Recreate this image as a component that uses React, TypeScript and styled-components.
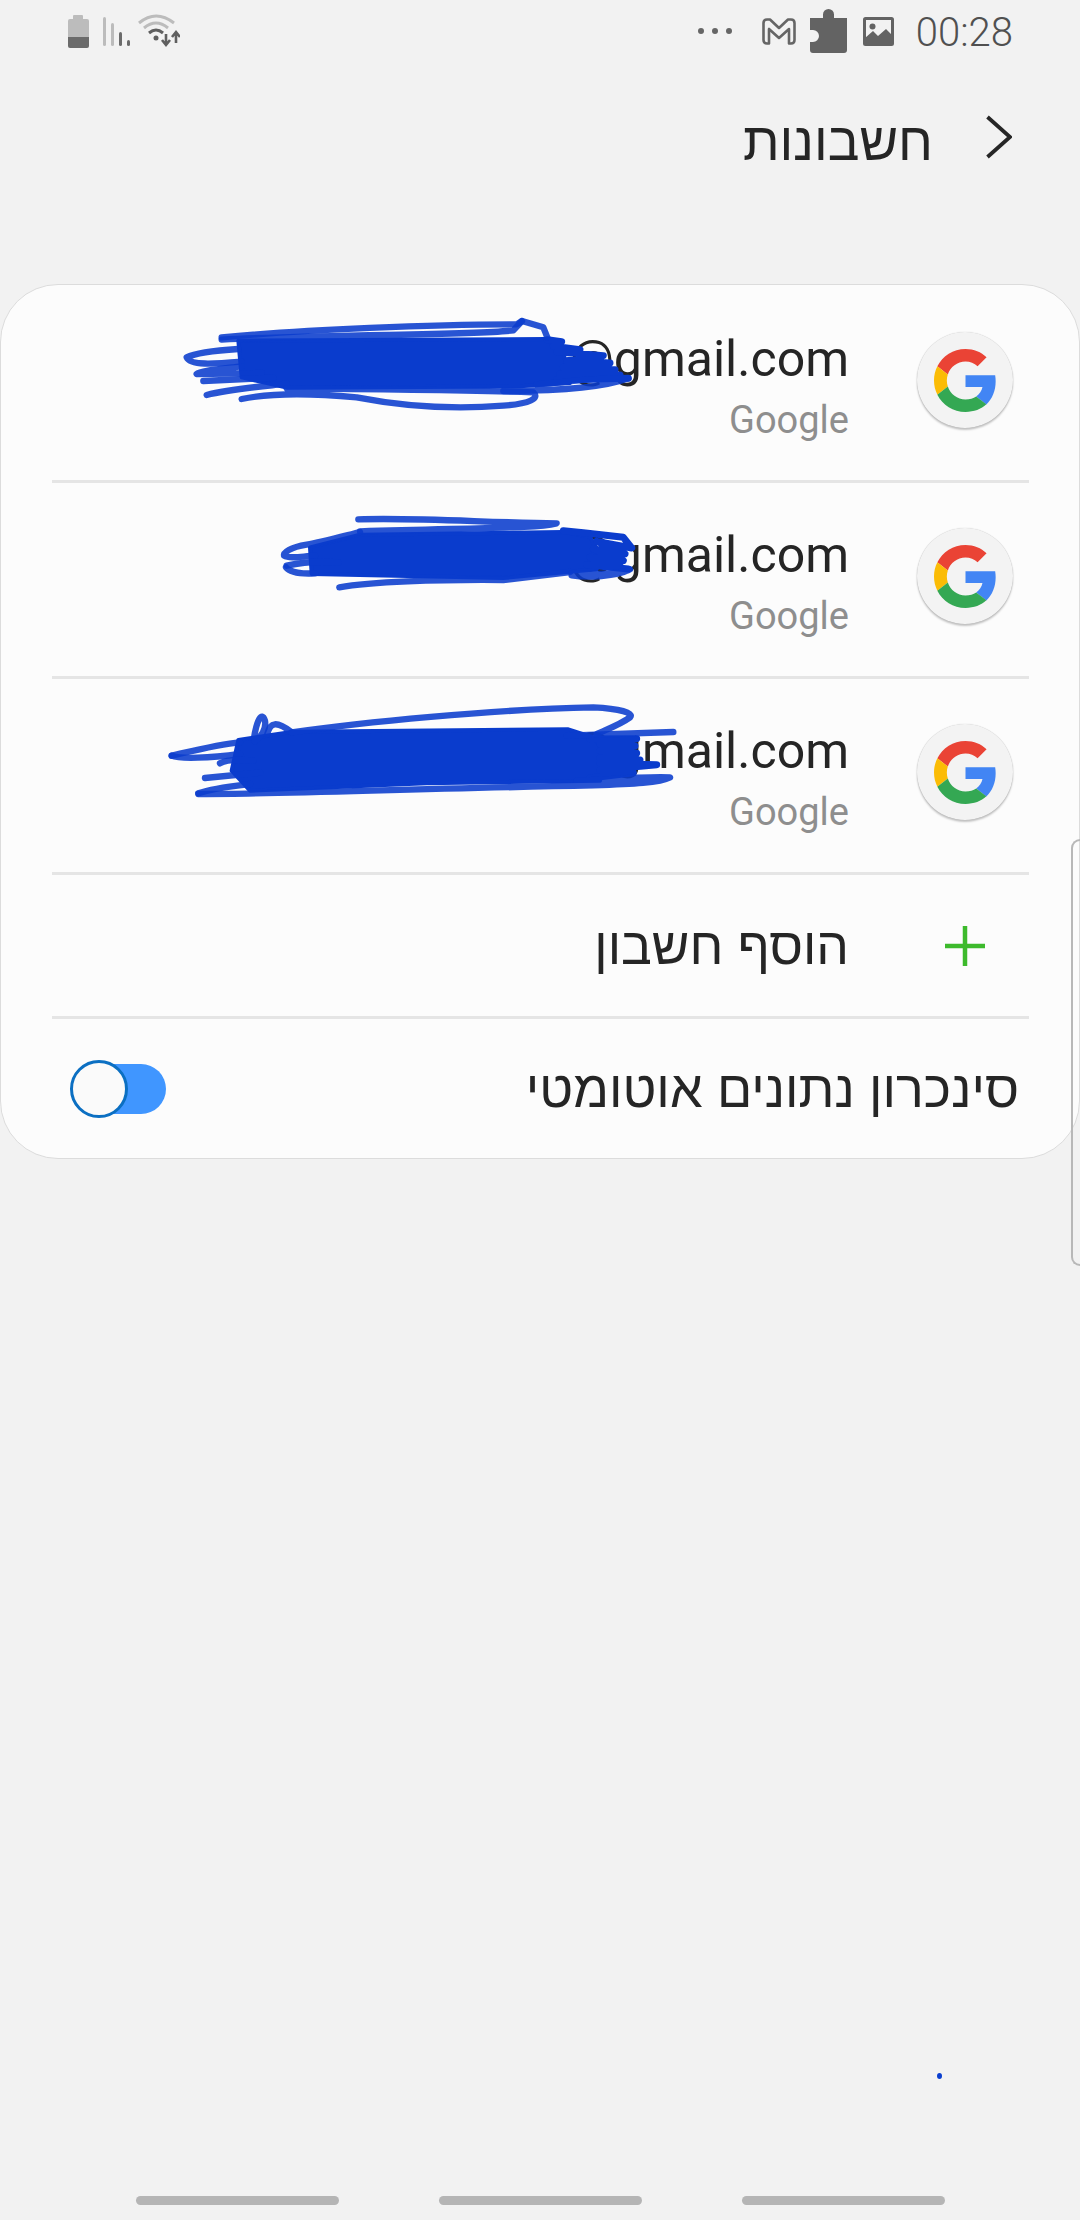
import React from "react";
import styled, { createGlobalStyle } from "styled-components";

const Global = createGlobalStyle`
  html, body { margin: 0; padding: 0; background: #f2f2f2; }
  #root { width: 1080px; height: 2220px; }
`;

const Page = styled.div`
  position: relative;
  width: 1080px;
  height: 2220px;
  overflow: hidden;
  background: #f2f2f2;
  display: flex;
  flex-direction: column;
  font-family: "Liberation Sans", "DejaVu Sans", sans-serif;
  color: #252525;
`;

const StatusBar = styled.div`
  height: 62px;
  padding: 0 67px 0 68px;
  display: flex;
  align-items: center;
  justify-content: space-between;
`;

const StatusRight = styled.div`
  display: flex;
  align-items: center;
`;

const StatusIcon = styled.svg<{ $gap: number }>`
  display: block;
  margin-left: ${(p) => p.$gap}px;
  flex: none;
`;

const Clock = styled.span`
  margin: 4px 0 0 22px;
  font-family: Roboto, sans-serif;
  font-weight: 300;
  font-size: 40px;
  line-height: 40px;
  color: #505050;
`;

const Header = styled.header`
  height: 222px;
  box-sizing: border-box;
  padding: 53px 68px 0 0;
  display: flex;
  flex-direction: row-reverse;
  align-items: flex-start;
  direction: ltr;
`;

const BackIcon = styled.svg`
  display: block;
  flex: none;
`;

const Title = styled.h1`
  margin: -3px 53px 0 0;
  font-size: 53px;
  font-weight: 400;
  line-height: 60px;
  direction: rtl;
`;

const Card = styled.section`
  direction: rtl;
  box-sizing: border-box;
  padding-top: 2px;
  background: #fcfcfc;
  border: 1px solid #dcdcdc;
  border-radius: 58px;
`;

const AccountRow = styled.div`
  position: relative;
  height: 193px;
  box-sizing: border-box;
  padding: 45px 66px 0 0;
  display: flex;
  align-items: flex-start;
`;

const Avatar = styled.div`
  width: 96px;
  height: 96px;
  flex: none;
  border-radius: 50%;
  background: #f3f3f3;
  box-shadow: 0 2px 2px rgba(0, 0, 0, 0.22), 0 0 1px rgba(0, 0, 0, 0.25);
  display: flex;
  align-items: center;
  justify-content: center;
`;

const AccountText = styled.div`
  margin-right: 68px;
  direction: ltr;
  text-align: right;
`;

const Email = styled.div`
  font-family: Roboto, sans-serif;
  font-size: 50px;
  line-height: 58px;
  margin-top: -2px;
`;

const Provider = styled.div`
  font-family: Roboto, sans-serif;
  font-size: 38px;
  line-height: 44px;
  margin-top: 10px;
  color: #8e8e8e;
`;

const Scribble = styled.svg<{ $left: number; $top: number }>`
  position: absolute;
  left: ${(p) => p.$left}px;
  top: ${(p) => p.$top}px;
  pointer-events: none;
`;

const Divider = styled.div`
  height: 3px;
  margin: 0 50px 0 51px;
  background: #e5e5e5;
`;

const AddRow = styled.div`
  height: 141px;
  box-sizing: border-box;
  padding-right: 66px;
  display: flex;
  align-items: center;
`;

const AddIconBox = styled.div`
  width: 96px;
  flex: none;
  display: flex;
  justify-content: center;
`;

const AddLabel = styled.span`
  margin-right: 68px;
  font-size: 51.5px;
  line-height: 56px;
`;

const SyncRow = styled.div`
  height: 139px;
  box-sizing: border-box;
  padding: 0 60px 0 69px;
  display: flex;
  align-items: center;
  justify-content: space-between;
`;

const SyncLabel = styled.span`
  font-size: 52px;
  line-height: 56px;
`;

const Toggle = styled.div`
  position: relative;
  width: 96px;
  height: 58px;
  flex: none;
  direction: ltr;
`;

const ToggleTrack = styled.div`
  position: absolute;
  left: 10px;
  right: 0;
  top: 4px;
  height: 50px;
  border-radius: 25px;
  background: #4096ff;
`;

const ToggleThumb = styled.div`
  position: absolute;
  left: 0;
  top: 0;
  box-sizing: border-box;
  width: 58px;
  height: 58px;
  border-radius: 50%;
  background: #fafafa;
  border: 3.5px solid #0b6fc2;
`;

const EdgeHandle = styled.div`
  position: absolute;
  right: 0;
  top: 839px;
  width: 9px;
  height: 427px;
  box-sizing: border-box;
  border: 2px solid #b8b8b8;
  border-right: 0;
  border-radius: 10px 0 0 10px;
`;

const PenDot = styled.div`
  position: absolute;
  left: 937px;
  top: 2073px;
  width: 5px;
  height: 6px;
  border-radius: 50%;
  background: #0b3fcf;
`;

const NavBar = styled.nav`
  margin-top: auto;
  height: 24px;
  box-sizing: border-box;
  padding-left: 136px;
  display: flex;
  gap: 100px;
`;

const NavPill = styled.div`
  width: 203px;
  height: 9px;
  border-radius: 5px;
  background: #b5b5b5;
`;

const GoogleG = () => (
  <svg width="63" height="63" viewBox="0 0 48 48">
    <path fill="#EA4335" d="M24 9.5c3.54 0 6.71 1.22 9.21 3.6l6.85-6.85C35.9 2.38 30.47 0 24 0 14.62 0 6.51 5.38 2.56 13.22l7.98 6.19C12.43 13.72 17.74 9.5 24 9.5z" />
    <path fill="#4285F4" d="M46.98 24.55c0-1.57-.15-3.09-.38-4.55H24v9.02h12.94c-.58 2.96-2.26 5.48-4.78 7.18l7.73 6c4.51-4.18 7.09-10.36 7.09-17.65z" />
    <path fill="#FBBC05" d="M10.53 28.59c-.48-1.45-.76-2.99-.76-4.59s.27-3.14.76-4.59l-7.98-6.19C.92 16.46 0 20.12 0 24c0 3.88.92 7.54 2.56 10.78l7.97-6.19z" />
    <path fill="#34A853" d="M24 48c6.48 0 11.93-2.13 15.89-5.81l-7.73-6c-2.15 1.45-4.92 2.3-8.16 2.3-6.26 0-11.57-4.22-13.47-9.91l-7.98 6.19C6.51 42.62 14.62 48 24 48z" />
  </svg>
);

// Hand-drawn pen marks over the private part of each address: a solid mass,
// opaque back-and-forth strokes at its end, and looser lines around it.
const PEN = "#0a3ccd";

type Mark = { left: number; top: number; w: number; h: number; block: string; cover: string; lines: string[] };

const PenMark = ({ left, top, w, h, block, cover, lines }: Mark) => (
  <Scribble $left={left} $top={top} width={w} height={h} viewBox={`0 0 ${w * 3} ${h * 3}`}>
    <path d={block} fill={PEN} stroke={PEN} strokeWidth="12" strokeLinejoin="round" />
    <path d={cover} fill="none" stroke={PEN} strokeWidth="21" strokeLinecap="round" strokeLinejoin="round" />
    {lines.map((d) => (
      <path key={d} d={d} fill="none" stroke={PEN} strokeWidth="19" strokeLinecap="round" strokeLinejoin="round" strokeOpacity="0.88" />
    ))}
  </Scribble>
);

const markOne = {
  block: "M205 95 L1130 90 L1180 130 L1200 222 L1050 232 L350 236 L215 205 Z",
  cover:
    "M1132 92 L1175 98 L1150 112 L1230 122 L1160 128 L1300 140 L1190 155 L1320 162 L1180 175 L1335 182 L1170 195 L1350 198 L1160 212 L1375 208",
  lines: [
    "M155 85 C400 62 800 46 1040 46 L1056 36 L1120 55 L1132 85",
    "M155 92 C500 74 900 80 1030 64 L1056 36",
    "M205 120 C130 125 70 135 50 145 C60 170 130 165 215 158",
    "M215 172 C150 180 90 185 80 195 L275 192",
    "M100 216 L310 206",
    "M110 258 C180 240 280 232 350 224",
    "M215 270 C300 252 420 252 560 265 C700 292 850 302 1000 290 C1080 284 1110 268 1090 250 C900 244 600 240 350 238",
    "M1000 246 C1150 246 1300 236 1375 208 C1300 204 1200 218 1100 226",
  ],
};

const markTwo = {
  block: "M120 130 L270 92 L880 84 L960 98 L990 150 L980 196 L700 222 L125 210 Z",
  cover:
    "M880 80 L940 86 L1060 100 L1085 132 L980 112 L1065 150 L970 135 L1060 170 L960 160 L1050 188 L950 182 L1075 195",
  lines: [
    "M265 46 C450 40 650 56 860 58 C800 72 700 70 270 82",
    "M270 84 C200 102 150 116 110 122 C60 130 40 146 42 155 C60 166 100 156 135 155",
    "M50 185 C100 174 150 170 205 176",
    "M48 190 C60 206 100 210 135 208",
    "M208 250 C300 234 500 226 700 228 L900 204",
    "M905 208 C1000 212 1060 208 1080 196 C1040 218 950 222 905 214",
  ],
};

const markThree = {
  block: "M235 138 L400 113 L1225 106 L1300 130 L1340 180 L1320 260 L800 268 L270 290 L215 230 Z",
  cover:
    "M1290 135 L1430 134 L1320 150 L1425 156 L1320 170 L1430 178 L1320 192 L1440 198 L1320 208 L1490 212 L1320 228 L1420 236 L1290 252",
  lines: [
    "M35 185 C100 170 180 150 240 145",
    "M35 185 C60 196 150 192 240 180",
    "M282 132 C290 80 305 50 315 80 C320 110 300 130 285 142",
    "M322 120 C330 84 350 80 395 115",
    "M395 115 C600 85 1000 46 1300 40 C1380 44 1422 56 1410 70 C1380 92 1340 106 1310 120",
    "M180 208 C200 196 240 196 280 200",
    "M135 252 L300 236",
    "M115 298 C160 282 220 276 270 270",
    "M115 300 C300 302 700 286 1300 274 C1420 270 1500 266 1530 250 C1450 246 1300 260 1250 260",
    "M1220 125 L1540 114",
  ],
};

const accounts = [
  { id: "a", mark: { left: 169, top: 22, w: 480, h: 110, ...markOne } },
  { id: "b", mark: { left: 269, top: 21, w: 380, h: 95, ...markTwo } },
  { id: "c", mark: { left: 159, top: 15, w: 520, h: 115, ...markThree } },
];

export default function App() {
  return (
    <Page>
      <Global />
      <StatusBar>
        <svg width="112" height="38" viewBox="0 0 112 38">
          <rect x="5" y="3" width="10" height="6" rx="1" fill="#bcbcbc" />
          <path d="M0 9 Q0 7 2 7 H19 Q21 7 21 9 V25 H0 Z" fill="#bcbcbc" />
          <path d="M0 25 H21 V34 Q21 36 19 36 H2 Q0 36 0 34 Z" fill="#6b6b6b" />
          <rect x="35" y="5" width="3" height="29" rx="1.5" fill="#bcbcbc" />
          <rect x="43" y="11" width="3" height="23" rx="1.5" fill="#bcbcbc" />
          <rect x="51" y="20" width="3" height="14" rx="1.5" fill="#6b6b6b" />
          <rect x="59" y="28" width="3" height="6" rx="1.5" fill="#6b6b6b" />
          <path d="M71 11 Q88 -3 106 11" fill="none" stroke="#bcbcbc" strokeWidth="3" />
          <path d="M76 16 Q88 6 100 16" fill="none" stroke="#bcbcbc" strokeWidth="3" />
          <path d="M81 21 Q88 15 95 21" fill="none" stroke="#5f5f5f" strokeWidth="3" />
          <circle cx="88" cy="26" r="2.5" fill="#5f5f5f" />
          <path d="M98 22 V32 M94 28 L98 33 L102 28" fill="none" stroke="#5f5f5f" strokeWidth="2.6" />
          <path d="M108 31 V21 M104 25 L108 20 L112 25" fill="none" stroke="#5f5f5f" strokeWidth="2.6" />
        </svg>
        <StatusRight>
          <StatusIcon $gap={0} width="34" height="8" viewBox="0 0 34 8">
            <circle cx="3" cy="4" r="3" fill="#666" />
            <circle cx="17" cy="4" r="3" fill="#666" />
            <circle cx="31" cy="4" r="3" fill="#666" />
          </StatusIcon>
          <StatusIcon $gap={30} width="34" height="27" viewBox="0 0 34 27">
            <path d="M1.5 5 Q1.5 1.5 5 1.5 H8 L17 10 L26 1.5 H29 Q32.5 1.5 32.5 5 V22 Q32.5 25.5 29 25.5 H27 V11 L17 20 L7 11 V25.5 H5 Q1.5 25.5 1.5 22 Z" fill="none" stroke="#666" strokeWidth="2.6" strokeLinejoin="round" />
          </StatusIcon>
          <StatusIcon $gap={14} width="37" height="44" viewBox="0 0 37 44">
            <path d="M0 9 H13 V5.5 A5.5 5.5 0 0 1 24 5.5 V9 H37 V41 Q37 44 34 44 H3 Q0 44 0 41 V33 H3 A6 6 0 0 0 3 21 H0 Z" fill="#636363" />
          </StatusIcon>
          <StatusIcon $gap={16} width="31" height="29" viewBox="0 0 31 29">
            <rect x="1.5" y="1.5" width="28" height="26" rx="1" fill="none" stroke="#636363" strokeWidth="3" />
            <circle cx="9.5" cy="9.5" r="3" fill="#636363" />
            <path d="M2 26 L2 21 L10 14 L15 19 L23 12 L29 18 V27 H2 Z" fill="#636363" />
          </StatusIcon>
          <Clock>00:28</Clock>
        </StatusRight>
      </StatusBar>

      <Header>
        <BackIcon width="26" height="44" viewBox="0 0 26 44">
          <path d="M1.5 2 L24 22 L1.5 42" fill="none" stroke="#262626" strokeWidth="3.8" />
        </BackIcon>
        <Title>חשבונות</Title>
      </Header>

      <Card>
        {accounts.map(({ id, mark }) => (
          <React.Fragment key={id}>
            <AccountRow>
              <Avatar>
                <GoogleG />
              </Avatar>
              <AccountText>
                <Email>@gmail.com</Email>
                <Provider>Google</Provider>
              </AccountText>
              <PenMark {...mark} />
            </AccountRow>
            <Divider />
          </React.Fragment>
        ))}
        <AddRow>
          <AddIconBox>
            <svg width="42" height="42" viewBox="0 0 42 42">
              <path d="M21 1 V41 M1 21 H41" fill="none" stroke="#3dba2c" strokeWidth="4.5" />
            </svg>
          </AddIconBox>
          <AddLabel>הוסף חשבון</AddLabel>
        </AddRow>
        <Divider />
        <SyncRow>
          <SyncLabel>סינכרון נתונים אוטומטי</SyncLabel>
          <Toggle>
            <ToggleTrack />
            <ToggleThumb />
          </Toggle>
        </SyncRow>
      </Card>

      <EdgeHandle />
      <PenDot />

      <NavBar>
        <NavPill />
        <NavPill />
        <NavPill />
      </NavBar>
    </Page>
  );
}
